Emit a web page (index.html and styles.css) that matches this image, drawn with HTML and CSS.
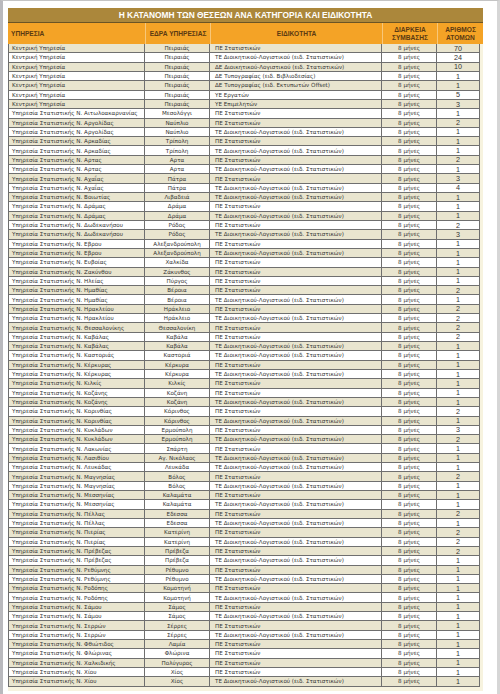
FILE: index.html
```html
<!DOCTYPE html>
<html lang="el">
<head>
<meta charset="utf-8">
<title>Η κατανομή των θέσεων</title>
<link rel="stylesheet" href="styles.css">
</head>
<body>
<div class="page">
  <div class="card">
    <div class="title">Η ΚΑΤΑΝΟΜΗ ΤΩΝ ΘΕΣΕΩΝ ΑΝΑ ΚΑΤΗΓΟΡΙΑ ΚΑΙ ΕΙΔΙΚΟΤΗΤΑ</div>
    <div class="head">
      <div class="h l">ΥΠΗΡΕΣΙΑ</div>
      <div class="h">ΕΔΡΑ ΥΠΗΡΕΣΙΑΣ</div>
      <div class="h">ΕΙΔΙΚΟΤΗΤΑ</div>
      <div class="h">ΔΙΑΡΚΕΙΑ<br>ΣΥΜΒΑΣΗΣ</div>
      <div class="h">ΑΡΙΘΜΟΣ<br>ΑΤΟΜΩΝ</div>
    </div>
    <div class="body">
      <div class="r"><span>Κεντρική Υπηρεσία</span><span>Πειραιάς</span><span>ΠΕ Στατιστικών</span><span>8 μήνες</span><span>70</span></div>
      <div class="r"><span>Κεντρική Υπηρεσία</span><span>Πειραιάς</span><span>ΤΕ Διοικητικού-Λογιστικού (ειδ. Στατιστικών)</span><span>8 μήνες</span><span>24</span></div>
      <div class="r"><span>Κεντρική Υπηρεσία</span><span>Πειραιάς</span><span>ΔΕ Διοικητικού-Λογιστικού (ειδ. Στατιστικών)</span><span>8 μήνες</span><span>10</span></div>
      <div class="r"><span>Κεντρική Υπηρεσία</span><span>Πειραιάς</span><span>ΔΕ Τυπογραφίας (ειδ. Βιβλιοδεσίας)</span><span>8 μήνες</span><span>1</span></div>
      <div class="r"><span>Κεντρική Υπηρεσία</span><span>Πειραιάς</span><span>ΔΕ Τυπογραφίας (ειδ. Εκτυπωτών Offset)</span><span>8 μήνες</span><span>1</span></div>
      <div class="r"><span>Κεντρική Υπηρεσία</span><span>Πειραιάς</span><span>ΥΕ Εργατών</span><span>8 μήνες</span><span>5</span></div>
      <div class="r"><span>Κεντρική Υπηρεσία</span><span>Πειραιάς</span><span>ΥΕ Επιμελητών</span><span>8 μήνες</span><span>3</span></div>
      <div class="r"><span>Υπηρεσία Στατιστικής Ν. Αιτωλοακαρνανίας</span><span>Μεσολόγγι</span><span>ΠΕ Στατιστικών</span><span>8 μήνες</span><span>1</span></div>
      <div class="r"><span>Υπηρεσία Στατιστικής Ν. Αργολίδας</span><span>Ναύπλιο</span><span>ΠΕ Στατιστικών</span><span>8 μήνες</span><span>2</span></div>
      <div class="r"><span>Υπηρεσία Στατιστικής Ν. Αργολίδας</span><span>Ναύπλιο</span><span>ΤΕ Διοικητικού-Λογιστικού (ειδ. Στατιστικών)</span><span>8 μήνες</span><span>1</span></div>
      <div class="r"><span>Υπηρεσία Στατιστικής Ν. Αρκαδίας</span><span>Τρίπολη</span><span>ΠΕ Στατιστικών</span><span>8 μήνες</span><span>1</span></div>
      <div class="r"><span>Υπηρεσία Στατιστικής Ν. Αρκαδίας</span><span>Τρίπολη</span><span>ΤΕ Διοικητικού-Λογιστικού (ειδ. Στατιστικών)</span><span>8 μήνες</span><span>1</span></div>
      <div class="r"><span>Υπηρεσία Στατιστικής Ν. Αρτας</span><span>Αρτα</span><span>ΠΕ Στατιστικών</span><span>8 μήνες</span><span>2</span></div>
      <div class="r"><span>Υπηρεσία Στατιστικής Ν. Αρτας</span><span>Αρτα</span><span>ΤΕ Διοικητικού-Λογιστικού (ειδ. Στατιστικών)</span><span>8 μήνες</span><span>1</span></div>
      <div class="r"><span>Υπηρεσία Στατιστικής Ν. Αχαΐας</span><span>Πάτρα</span><span>ΠΕ Στατιστικών</span><span>8 μήνες</span><span>3</span></div>
      <div class="r"><span>Υπηρεσία Στατιστικής Ν. Αχαΐας</span><span>Πάτρα</span><span>ΤΕ Διοικητικού-Λογιστικού (ειδ. Στατιστικών)</span><span>8 μήνες</span><span>4</span></div>
      <div class="r"><span>Υπηρεσία Στατιστικής Ν. Βοιωτίας</span><span>Λιβαδειά</span><span>ΤΕ Διοικητικού-Λογιστικού (ειδ. Στατιστικών)</span><span>8 μήνες</span><span>1</span></div>
      <div class="r"><span>Υπηρεσία Στατιστικής Ν. Δράμας</span><span>Δράμα</span><span>ΠΕ Στατιστικών</span><span>8 μήνες</span><span>1</span></div>
      <div class="r"><span>Υπηρεσία Στατιστικής Ν. Δράμας</span><span>Δράμα</span><span>ΤΕ Διοικητικού-Λογιστικού (ειδ. Στατιστικών)</span><span>8 μήνες</span><span>1</span></div>
      <div class="r"><span>Υπηρεσία Στατιστικής Ν. Δωδεκανήσου</span><span>Ρόδος</span><span>ΠΕ Στατιστικών</span><span>8 μήνες</span><span>2</span></div>
      <div class="r"><span>Υπηρεσία Στατιστικής Ν. Δωδεκανήσου</span><span>Ρόδος</span><span>ΤΕ Διοικητικού-Λογιστικού (ειδ. Στατιστικών)</span><span>8 μήνες</span><span>3</span></div>
      <div class="r"><span>Υπηρεσία Στατιστικής Ν. Εβρου</span><span>Αλεξανδρούπολη</span><span>ΠΕ Στατιστικών</span><span>8 μήνες</span><span>1</span></div>
      <div class="r"><span>Υπηρεσία Στατιστικής Ν. Εβρου</span><span>Αλεξανδρούπολη</span><span>ΤΕ Διοικητικού-Λογιστικού (ειδ. Στατιστικών)</span><span>8 μήνες</span><span>1</span></div>
      <div class="r"><span>Υπηρεσία Στατιστικής Ν. Ευβοίας</span><span>Χαλκίδα</span><span>ΠΕ Στατιστικών</span><span>8 μήνες</span><span>1</span></div>
      <div class="r"><span>Υπηρεσία Στατιστικής Ν. Ζακύνθου</span><span>Ζάκυνθος</span><span>ΠΕ Στατιστικών</span><span>8 μήνες</span><span>1</span></div>
      <div class="r"><span>Υπηρεσία Στατιστικής Ν. Ηλείας</span><span>Πύργος</span><span>ΠΕ Στατιστικών</span><span>8 μήνες</span><span>1</span></div>
      <div class="r"><span>Υπηρεσία Στατιστικής Ν. Ημαθίας</span><span>Βέροια</span><span>ΠΕ Στατιστικών</span><span>8 μήνες</span><span>2</span></div>
      <div class="r"><span>Υπηρεσία Στατιστικής Ν. Ημαθίας</span><span>Βέροια</span><span>ΤΕ Διοικητικού-Λογιστικού (ειδ. Στατιστικών)</span><span>8 μήνες</span><span>1</span></div>
      <div class="r"><span>Υπηρεσία Στατιστικής Ν. Ηρακλείου</span><span>Ηράκλειο</span><span>ΠΕ Στατιστικών</span><span>8 μήνες</span><span>2</span></div>
      <div class="r"><span>Υπηρεσία Στατιστικής Ν. Ηρακλείου</span><span>Ηράκλειο</span><span>ΤΕ Διοικητικού-Λογιστικού (ειδ. Στατιστικών)</span><span>8 μήνες</span><span>2</span></div>
      <div class="r"><span>Υπηρεσία Στατιστικής Ν. Θεσσαλονίκης</span><span>Θεσσαλονίκη</span><span>ΠΕ Στατιστικών</span><span>8 μήνες</span><span>2</span></div>
      <div class="r"><span>Υπηρεσία Στατιστικής Ν. Καβάλας</span><span>Καβάλα</span><span>ΠΕ Στατιστικών</span><span>8 μήνες</span><span>2</span></div>
      <div class="r"><span>Υπηρεσία Στατιστικής Ν. Καβάλας</span><span>Καβάλα</span><span>ΤΕ Διοικητικού-Λογιστικού (ειδ. Στατιστικών)</span><span>8 μήνες</span><span>1</span></div>
      <div class="r"><span>Υπηρεσία Στατιστικής Ν. Καστοριάς</span><span>Καστοριά</span><span>ΤΕ Διοικητικού-Λογιστικού (ειδ. Στατιστικών)</span><span>8 μήνες</span><span>1</span></div>
      <div class="r"><span>Υπηρεσία Στατιστικής Ν. Κέρκυρας</span><span>Κέρκυρα</span><span>ΠΕ Στατιστικών</span><span>8 μήνες</span><span>1</span></div>
      <div class="r"><span>Υπηρεσία Στατιστικής Ν. Κέρκυρας</span><span>Κέρκυρα</span><span>ΤΕ Διοικητικού-Λογιστικού (ειδ. Στατιστικών)</span><span>8 μήνες</span><span>1</span></div>
      <div class="r"><span>Υπηρεσία Στατιστικής Ν. Κιλκίς</span><span>Κιλκίς</span><span>ΠΕ Στατιστικών</span><span>8 μήνες</span><span>1</span></div>
      <div class="r"><span>Υπηρεσία Στατιστικής Ν. Κοζάνης</span><span>Κοζάνη</span><span>ΠΕ Στατιστικών</span><span>8 μήνες</span><span>1</span></div>
      <div class="r"><span>Υπηρεσία Στατιστικής Ν. Κοζάνης</span><span>Κοζάνη</span><span>ΤΕ Διοικητικού-Λογιστικού (ειδ. Στατιστικών)</span><span>8 μήνες</span><span>1</span></div>
      <div class="r"><span>Υπηρεσία Στατιστικής Ν. Κορινθίας</span><span>Κόρινθος</span><span>ΠΕ Στατιστικών</span><span>8 μήνες</span><span>2</span></div>
      <div class="r"><span>Υπηρεσία Στατιστικής Ν. Κορινθίας</span><span>Κόρινθος</span><span>ΤΕ Διοικητικού-Λογιστικού (ειδ. Στατιστικών)</span><span>8 μήνες</span><span>1</span></div>
      <div class="r"><span>Υπηρεσία Στατιστικής Ν. Κυκλάδων</span><span>Ερμούπολη</span><span>ΠΕ Στατιστικών</span><span>8 μήνες</span><span>3</span></div>
      <div class="r"><span>Υπηρεσία Στατιστικής Ν. Κυκλάδων</span><span>Ερμούπολη</span><span>ΤΕ Διοικητικού-Λογιστικού (ειδ. Στατιστικών)</span><span>8 μήνες</span><span>2</span></div>
      <div class="r"><span>Υπηρεσία Στατιστικής Ν. Λακωνίας</span><span>Σπάρτη</span><span>ΠΕ Στατιστικών</span><span>8 μήνες</span><span>1</span></div>
      <div class="r"><span>Υπηρεσία Στατιστικής Ν. Λασιθίου</span><span>Αγ. Νικόλαος</span><span>ΤΕ Διοικητικού-Λογιστικού (ειδ. Στατιστικών)</span><span>8 μήνες</span><span>1</span></div>
      <div class="r"><span>Υπηρεσία Στατιστικής Ν. Λευκάδας</span><span>Λευκάδα</span><span>ΤΕ Διοικητικού-Λογιστικού (ειδ. Στατιστικών)</span><span>8 μήνες</span><span>1</span></div>
      <div class="r"><span>Υπηρεσία Στατιστικής Ν. Μαγνησίας</span><span>Βόλος</span><span>ΠΕ Στατιστικών</span><span>8 μήνες</span><span>2</span></div>
      <div class="r"><span>Υπηρεσία Στατιστικής Ν. Μαγνησίας</span><span>Βόλος</span><span>ΤΕ Διοικητικού-Λογιστικού (ειδ. Στατιστικών)</span><span>8 μήνες</span><span>1</span></div>
      <div class="r"><span>Υπηρεσία Στατιστικής Ν. Μεσσηνίας</span><span>Καλαμάτα</span><span>ΠΕ Στατιστικών</span><span>8 μήνες</span><span>1</span></div>
      <div class="r"><span>Υπηρεσία Στατιστικής Ν. Μεσσηνίας</span><span>Καλαμάτα</span><span>ΤΕ Διοικητικού-Λογιστικού (ειδ. Στατιστικών)</span><span>8 μήνες</span><span>1</span></div>
      <div class="r"><span>Υπηρεσία Στατιστικής Ν. Πέλλας</span><span>Εδεσσα</span><span>ΠΕ Στατιστικών</span><span>8 μήνες</span><span>2</span></div>
      <div class="r"><span>Υπηρεσία Στατιστικής Ν. Πέλλας</span><span>Εδεσσα</span><span>ΤΕ Διοικητικού-Λογιστικού (ειδ. Στατιστικών)</span><span>8 μήνες</span><span>1</span></div>
      <div class="r"><span>Υπηρεσία Στατιστικής Ν. Πιερίας</span><span>Κατερίνη</span><span>ΠΕ Στατιστικών</span><span>8 μήνες</span><span>2</span></div>
      <div class="r"><span>Υπηρεσία Στατιστικής Ν. Πιερίας</span><span>Κατερίνη</span><span>ΤΕ Διοικητικού-Λογιστικού (ειδ. Στατιστικών)</span><span>8 μήνες</span><span>2</span></div>
      <div class="r"><span>Υπηρεσία Στατιστικής Ν. Πρέβεζας</span><span>Πρέβεζα</span><span>ΠΕ Στατιστικών</span><span>8 μήνες</span><span>2</span></div>
      <div class="r"><span>Υπηρεσία Στατιστικής Ν. Πρέβεζας</span><span>Πρέβεζα</span><span>ΤΕ Διοικητικού-Λογιστικού (ειδ. Στατιστικών)</span><span>8 μήνες</span><span>1</span></div>
      <div class="r"><span>Υπηρεσία Στατιστικής Ν. Ρεθύμνης</span><span>Ρέθυμνο</span><span>ΠΕ Στατιστικών</span><span>8 μήνες</span><span>1</span></div>
      <div class="r"><span>Υπηρεσία Στατιστικής Ν. Ρεθύμνης</span><span>Ρέθυμνο</span><span>ΤΕ Διοικητικού-Λογιστικού (ειδ. Στατιστικών)</span><span>8 μήνες</span><span>1</span></div>
      <div class="r"><span>Υπηρεσία Στατιστικής Ν. Ροδόπης</span><span>Κομοτηνή</span><span>ΠΕ Στατιστικών</span><span>8 μήνες</span><span>1</span></div>
      <div class="r"><span>Υπηρεσία Στατιστικής Ν. Ροδόπης</span><span>Κομοτηνή</span><span>ΤΕ Διοικητικού-Λογιστικού (ειδ. Στατιστικών)</span><span>8 μήνες</span><span>1</span></div>
      <div class="r"><span>Υπηρεσία Στατιστικής Ν. Σάμου</span><span>Σάμος</span><span>ΠΕ Στατιστικών</span><span>8 μήνες</span><span>1</span></div>
      <div class="r"><span>Υπηρεσία Στατιστικής Ν. Σάμου</span><span>Σάμος</span><span>ΤΕ Διοικητικού-Λογιστικού (ειδ. Στατιστικών)</span><span>8 μήνες</span><span>1</span></div>
      <div class="r"><span>Υπηρεσία Στατιστικής Ν. Σερρών</span><span>Σέρρες</span><span>ΠΕ Στατιστικών</span><span>8 μήνες</span><span>1</span></div>
      <div class="r"><span>Υπηρεσία Στατιστικής Ν. Σερρών</span><span>Σέρρες</span><span>ΤΕ Διοικητικού-Λογιστικού (ειδ. Στατιστικών)</span><span>8 μήνες</span><span>1</span></div>
      <div class="r"><span>Υπηρεσία Στατιστικής Ν. Φθιώτιδος</span><span>Λαμία</span><span>ΠΕ Στατιστικών</span><span>8 μήνες</span><span>1</span></div>
      <div class="r"><span>Υπηρεσία Στατιστικής Ν. Φλώρινας</span><span>Φλώρινα</span><span>ΠΕ Στατιστικών</span><span>8 μήνες</span><span>1</span></div>
      <div class="r"><span>Υπηρεσία Στατιστικής Ν. Χαλκιδικής</span><span>Πολύγυρος</span><span>ΠΕ Στατιστικών</span><span>8 μήνες</span><span>1</span></div>
      <div class="r"><span>Υπηρεσία Στατιστικής Ν. Χίου</span><span>Χίος</span><span>ΠΕ Στατιστικών</span><span>8 μήνες</span><span>1</span></div>
      <div class="r"><span>Υπηρεσία Στατιστικής Ν. Χίου</span><span>Χίος</span><span>ΤΕ Διοικητικού-Λογιστικού (ειδ. Στατιστικών)</span><span>8 μήνες</span><span>1</span></div>
    </div>
  </div>
</div>
</body>
</html>
```

FILE: styles.css
```css
html, body {
  margin: 0;
  padding: 0;
  background: #ffffff;
}
.page {
  width: 500px;
  height: 694px;
  box-sizing: border-box;
  border-top: 1px solid #c4c4c4;
  border-left: 3px solid #b9b9bd;
  border-right: 3px solid #d6d6d6;
  padding: 7px 0 0 5px;
  font-family: "Liberation Sans", Arial, sans-serif;
}
.card {
  width: 475px;
  background: #f7f3df;
  padding-bottom: 4px;
}
.title {
  height: 15px;
  background: #ab873b;
  color: #ffffff;
  font-weight: bold;
  font-size: 8.4px;
  line-height: 15px;
  text-align: center;
  border-bottom: 1px solid #6b5424;
  box-sizing: border-box;
}
.head {
  display: grid;
  grid-template-columns: 137px 65px 172px 55px 46px;
  height: 21px;
  background: #f4a326;
  color: #5b3a12;
  font-weight: bold;
  font-size: 6.6px;
  line-height: 7.5px;
}
.h {
  display: flex;
  align-items: center;
  justify-content: center;
  text-align: center;
  border-left: 1px solid #f8c778;
}
.h:first-child { border-left: none; }
.h.l {
  justify-content: flex-start;
  padding-left: 3px;
}
.body {
  width: 472px;
  border-left: 1px solid #6d6d6d;
  box-sizing: border-box;
}
.r {
  display: grid;
  grid-template-columns: 136px 65px 172px 55px 43px;
  height: 9.32px;
  box-sizing: border-box;
  border-bottom: 1px solid #6f6f6f;
  font-family: "DejaVu Sans", Verdana, sans-serif;
  font-size: 5.6px;
  color: #333333;
  background: #ffffff;
}
.r:nth-child(odd) { background: #e9e5cf; }
.r span {
  display: flex;
  align-items: center;
  justify-content: center;
  white-space: nowrap;
  overflow: hidden;
  border-right: 1px solid #6f6f6f;
}
.r span:first-child {
  justify-content: flex-start;
  padding-left: 3px;
}
.r span:nth-child(3) {
  justify-content: flex-start;
  padding-left: 5px;
}
.r span:nth-child(5) {
  font-family: "Liberation Sans", Arial, sans-serif;
  font-size: 7.2px;
}
```
